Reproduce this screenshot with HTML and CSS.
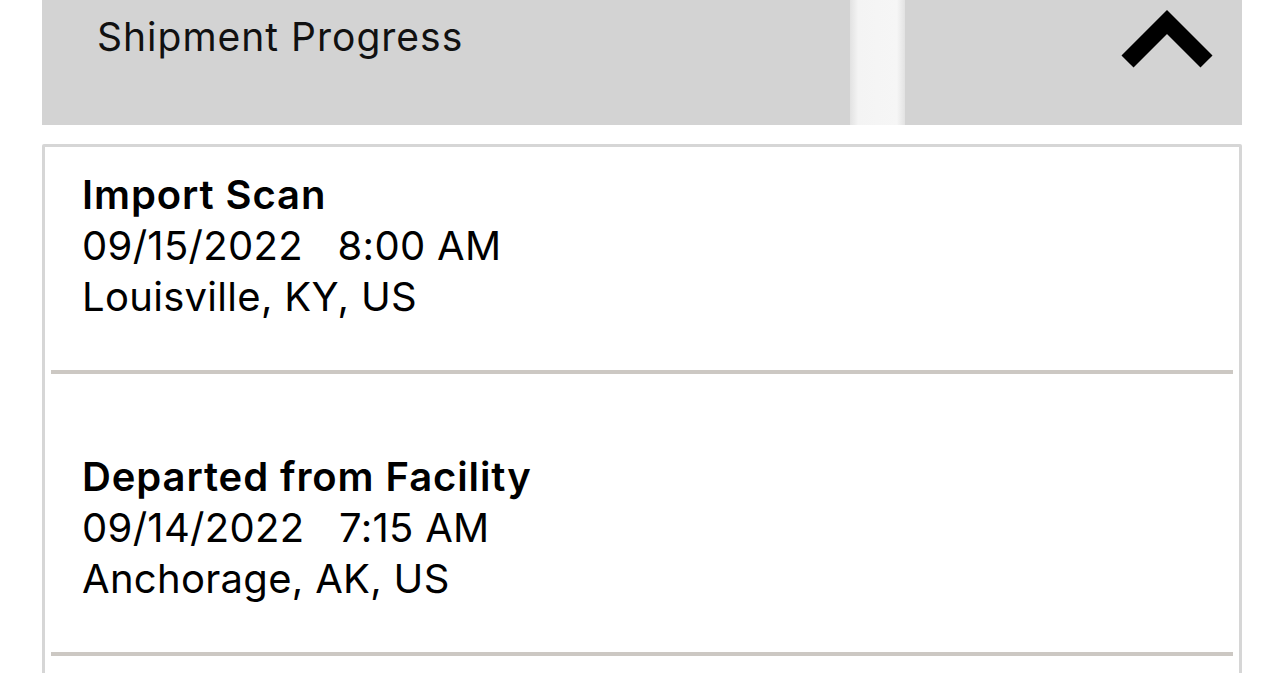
FILE: index.html
```html
<!DOCTYPE html>
<html lang="en">
<head>
    <meta charset="UTF-8">
    <meta name="viewport" content="width=device-width, initial-scale=1.0">
    <link rel="stylesheet" href="styles.css">
</head>
<body>
    <div class="container">
        <div class="panel-header">
            <h2>Shipment Progress</h2>
            <svg class="toggle" width="110" height="80" viewBox="0 0 110 80">
                <polyline points="17.5,61.5 57,22 96.5,61.5" fill="none" stroke="#000" stroke-width="17" stroke-linejoin="miter" stroke-linecap="butt"/>
            </svg>
            <span class="glare"></span>
        </div>
        <ul class="events">
            <li>
                <div class="event-title">Import Scan</div>
                <div class="event-line">09/15/2022   8:00 AM</div>
                <div class="event-line">Louisville, KY, US</div>
            </li>
            <li>
                <div class="event-title">Departed from Facility</div>
                <div class="event-line">09/14/2022   7:15 AM</div>
                <div class="event-line">Anchorage, AK, US</div>
            </li>
        </ul>
    </div>
</body>
</html>
```

FILE: styles.css
```css
body {
    font-family: Inter, "Liberation Sans", Arial, sans-serif;
    margin: 0;
    padding: 0;
    background-color: #fff;
    color: #000;
}

.container {
    width: 1200px;
    margin: 0 42px;
}

.panel-header {
    position: relative;
    display: flex;
    justify-content: space-between;
    align-items: flex-start;
    height: 125px;
    padding: 0 22px 0 55px;
    background-color: #d3d3d3;
}

.panel-header h2 {
    margin: 0;
    padding-top: 11px;
    font-size: 39px;
    font-weight: normal;
    line-height: 51px;
    letter-spacing: 1px;
    color: #111;
}

.toggle {
    display: block;
}

.glare {
    position: absolute;
    top: 0;
    left: 808px;
    width: 55px;
    height: 125px;
    background: linear-gradient(to right, #e2e2e2, #f4f4f4 15%, #f6f6f6 85%, #e2e2e2);
}

.events {
    list-style: none;
    margin: 19px 0 0;
    padding: 0 6px 80px;
    border: 3px solid #d6d6d6;
    border-radius: 2px;
}

.events li {
    padding: 77px 0 48px 31px;
    border-bottom: 4px solid #ccc8c3;
    font-size: 40px;
    line-height: 51px;
    letter-spacing: 0.3px;
}

.events li:first-child {
    padding-top: 22px;
}

.event-title {
    font-weight: 600;
    letter-spacing: 0.9px;
}

.event-line {
    white-space: pre;
}
```
